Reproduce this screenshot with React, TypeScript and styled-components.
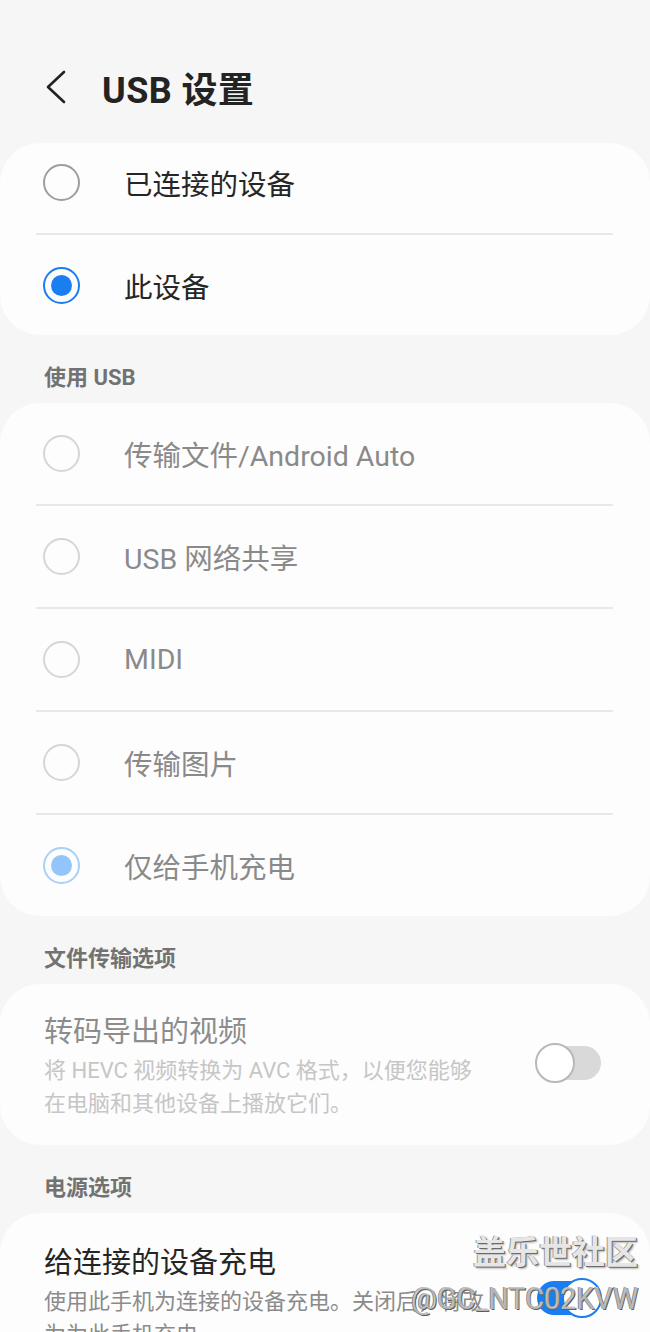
import React from "react";
import styled, { createGlobalStyle } from "styled-components";

const Global = createGlobalStyle`
  html, body { margin: 0; padding: 0; background: #f6f6f6; }
  body { overflow: hidden; font-family: Roboto, "Noto Sans CJK SC", sans-serif; }
  #root { height: 1332px; overflow: hidden; }
`;

const Page = styled.div`
  position: relative;
  width: 650px;
  height: 1332px;
  overflow: hidden;
  background: #f6f6f6;
  display: flex;
  flex-direction: column;
`;

const Header = styled.div`
  display: flex;
  align-items: center;
  height: 58px;
  padding: 58px 0 0 44px;
  margin-bottom: 27px;
  gap: 32px;
  flex-shrink: 0;
`;

const Title = styled.h1`
  margin: 0;
  font-size: 36px;
  font-weight: 700;
  color: #232323;
  letter-spacing: 0.4px;
`;

const Card = styled.div<{ $pt?: number; $pb?: number }>`
  background: #fdfdfd;
  border-radius: 40px;
  display: flex;
  flex-direction: column;
  padding-top: ${(p) => p.$pt ?? 0}px;
  padding-bottom: ${(p) => p.$pb ?? 0}px;
  flex-shrink: 0;
`;

const Row = styled.div<{ $h: number; $pb?: number }>`
  height: ${(p) => p.$h}px;
  box-sizing: border-box;
  padding-bottom: ${(p) => p.$pb ?? 0}px;
  display: flex;
  align-items: center;
  padding-left: 43px;
  gap: 44px;
`;

const Divider = styled.div`
  height: 2px;
  margin: 0 37px 0 36px;
  background: #e8e8e8;
`;

const Radio = styled.div<{ $checked?: boolean; $disabled?: boolean }>`
  width: 37px;
  height: 37px;
  box-sizing: border-box;
  border-radius: 50%;
  border: 2px solid
    ${(p) =>
      p.$checked ? (p.$disabled ? "#a9d0f8" : "#1a7df0") : p.$disabled ? "#d6d6d6" : "#9e9e9e"};
  display: flex;
  align-items: center;
  justify-content: center;
  flex-shrink: 0;
  &::after {
    content: "";
    display: ${(p) => (p.$checked ? "block" : "none")};
    width: 21px;
    height: 21px;
    border-radius: 50%;
    background: ${(p) => (p.$disabled ? "#94c5fa" : "#1a7df0")};
  }
`;

const Label = styled.span<{ $disabled?: boolean }>`
  font-size: 28.5px;
  color: ${(p) => (p.$disabled ? "#8a8a8a" : "#262626")};
  white-space: nowrap;
`;

const SectionTitle = styled.div`
  padding: 31px 0 13px 44px;
  font-size: 22px;
  line-height: 24px;
  font-weight: 700;
  color: #727272;
  flex-shrink: 0;
`;

const SwitchRow = styled.div`
  display: flex;
  align-items: center;
  justify-content: space-between;
  padding: 0 49px 0 44px;
`;

const TextCol = styled.div`
  display: flex;
  flex-direction: column;
`;

const ItemTitle = styled.div<{ $disabled?: boolean }>`
  font-size: 29px;
  line-height: 34px;
  color: ${(p) => (p.$disabled ? "#8c8c8c" : "#252525")};
  white-space: nowrap;
`;

const ItemSub = styled.div<{ $disabled?: boolean }>`
  margin-top: 5px;
  font-size: 22px;
  line-height: 33px;
  color: ${(p) => (p.$disabled ? "#c6c6c6" : "#8b8b8b")};
  white-space: nowrap;
`;

const Track = styled.div<{ $on?: boolean; $lift?: number }>`
  position: relative;
  width: 64px;
  height: 34px;
  margin-bottom: ${(p) => p.$lift ?? 0}px;
  border-radius: 17px;
  background: ${(p) => (p.$on ? "#1a7df0" : "#d9d9d9")};
  flex-shrink: 0;
`;

const Thumb = styled.div<{ $on?: boolean }>`
  position: absolute;
  top: -3px;
  ${(p) => (p.$on ? "right: -1px;" : "left: -2px;")}
  width: 40px;
  height: 40px;
  box-sizing: border-box;
  border-radius: 50%;
  background: #ffffff;
  border: 2px solid ${(p) => (p.$on ? "#1a7df0" : "#b8b8b8")};
`;

const Watermark = styled.div`
  position: absolute;
  right: 12px;
  top: 1230px;
  display: flex;
  flex-direction: column;
  align-items: flex-end;
  pointer-events: none;
`;

const WmBig = styled.div`
  font-family: "Noto Sans CJK SC", sans-serif;
  font-size: 33px;
  font-weight: 700;
  line-height: 40px;
  color: #e6e6e6;
  text-shadow: 1px 1px 0 #6a6a6a, -1px 0 0 #9a9a9a, 2px 2px 2px rgba(0,0,0,0.3);
`;

const WmSmall = styled.div`
  font-family: "Roboto", sans-serif;
  font-size: 32px;
  line-height: 38px;
  margin-top: 9px;
  color: rgba(240, 240, 240, 0.6);
  text-shadow: 1px 1px 0 #5e5e5e, -1px 0 0 #8a8a8a;
  transform: scaleX(0.9);
  transform-origin: right center;
`;

const Back = () => (
  <svg width="26" height="36" viewBox="0 0 26 36">
    <polyline points="20,3 4,18 20,33" fill="none" stroke="#222" strokeWidth="2.6" strokeLinecap="round" strokeLinejoin="round" />
  </svg>
);

const usbOptions = [
  { label: "传输文件/Android Auto", checked: false },
  { label: "USB 网络共享", checked: false },
  { label: "MIDI", checked: false },
  { label: "传输图片", checked: false },
  { label: "仅给手机充电", checked: true },
];

export default function App() {
  return (
    <Page>
      <Global />
      <Header>
        <Back />
        <Title>USB 设置</Title>
      </Header>

      <Card>
        <Row $h={90} $pb={12}>
          <Radio />
          <Label>已连接的设备</Label>
        </Row>
        <Divider />
        <Row $h={100}>
          <Radio $checked />
          <Label>此设备</Label>
        </Row>
      </Card>

      <SectionTitle>使用 USB</SectionTitle>
      <Card>
        {usbOptions.map((o, i) => (
          <React.Fragment key={o.label}>
            {i > 0 && <Divider />}
            <Row $h={101}>
              <Radio $disabled $checked={o.checked} />
              <Label $disabled>{o.label}</Label>
            </Row>
          </React.Fragment>
        ))}
      </Card>

      <SectionTitle>文件传输选项</SectionTitle>
      <Card $pt={31} $pb={25}>
        <SwitchRow>
          <TextCol>
            <ItemTitle $disabled>转码导出的视频</ItemTitle>
            <ItemSub $disabled>
              将 HEVC 视频转换为 AVC 格式，以便您能够
              <br />
              在电脑和其他设备上播放它们。
            </ItemSub>
          </TextCol>
          <Track $lift={10}>
            <Thumb />
          </Track>
        </SwitchRow>
      </Card>

      <SectionTitle>电源选项</SectionTitle>
      <Card $pt={33} $pb={25}>
        <SwitchRow>
          <TextCol>
            <ItemTitle>给连接的设备充电</ItemTitle>
            <ItemSub>
              使用此手机为连接的设备充电。关闭后，将改
              <br />
              为为此手机充电。
            </ItemSub>
          </TextCol>
          <Track $on $lift={2}>
            <Thumb $on />
          </Track>
        </SwitchRow>
      </Card>

      <Watermark>
        <WmBig>盖乐世社区</WmBig>
        <WmSmall>@GC_NTC02KVW</WmSmall>
      </Watermark>
    </Page>
  );
}
